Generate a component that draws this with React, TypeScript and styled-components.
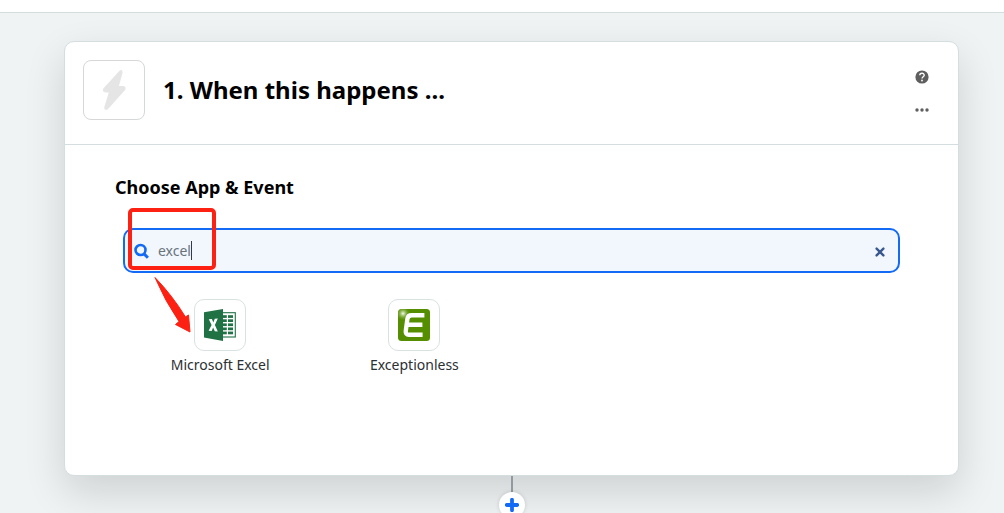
import React, { useState } from "react";
import styled, { createGlobalStyle } from "styled-components";

const GlobalStyle = createGlobalStyle`
  *, *::before, *::after { box-sizing: border-box; }
  body {
    margin: 0;
    overflow: hidden;
    background: #eff3f4;
    color: #000;
    font-family: "Noto Sans", "Open Sans", sans-serif;
  }
`;

const Page = styled.div`
  display: flex;
  flex-direction: column;
  height: 100vh;
  overflow: hidden;
`;

const TopBar = styled.header`
  flex: none;
  height: 13px;
  background: #fff;
  border-bottom: 1px solid #d4dcde;
`;

const Canvas = styled.main`
  flex: none;
  display: flex;
  flex-direction: column;
  align-items: center;
  padding: 28px 45px 0 64px;
`;

const Card = styled.section`
  width: 100%;
  background: #fff;
  border: 1px solid #d4dddf;
  border-radius: 10px;
  box-shadow: 0 16px 40px rgba(0, 0, 0, 0.14);
`;

const CardHeader = styled.div`
  display: flex;
  align-items: center;
  gap: 18px;
  padding: 18px;
  padding-bottom: 24px;
  border-bottom: 1px solid #d4dddf;
`;

const StepIcon = styled.div`
  display: flex;
  align-items: center;
  justify-content: center;
  width: 62px;
  height: 60px;
  border: 1px solid #d5d7d8;
  border-radius: 8px;
`;

const Title = styled.h1`
  flex: 1;
  margin: 0;
  font-size: 24px;
  font-weight: 700;
  line-height: 32px;
`;

const HeaderActions = styled.div`
  display: flex;
  flex-direction: column;
  gap: 18px;
  padding: 6px 11px 0 0;
`;

const IconButton = styled.button`
  display: flex;
  align-items: center;
  justify-content: center;
  width: 15px;
  height: 15px;
  padding: 0;
  border: 0;
  background: none;
  cursor: pointer;
`;

const CardBody = styled.div`
  min-height: 330px;
  padding: 30px 58px 0;
`;

const SectionTitle = styled.h2`
  margin: 0 -8px 28px;
  font-size: 18px;
  font-weight: 700;
  line-height: 25px;
`;

const SearchArea = styled.div`
  position: relative;
`;

const SearchField = styled.label`
  display: flex;
  align-items: center;
  gap: 9px;
  height: 45px;
  padding: 0 11px 0 9px;
  background: #f2f7fe;
  border: 2px solid #136bf5;
  border-radius: 10px;
`;

const QueryWrap = styled.span`
  flex: 1;
  display: flex;
  align-items: center;
`;

const Query = styled.input`
  field-sizing: content;
  min-width: 0;
  padding: 0;
  border: 0;
  outline: 0;
  background: none;
  color: #69737c;
  font: 400 14px/20px "Noto Sans", "Open Sans", sans-serif;
`;

const Caret = styled.span`
  width: 1px;
  height: 19px;
  background: #333b44;
`;

const Highlight = styled.div`
  position: absolute;
  top: -20px;
  left: 5px;
  width: 88px;
  height: 62px;
  border: 4px solid #fc2112;
  border-radius: 5px;
`;

const Arrow = styled.svg`
  position: absolute;
  top: 48px;
  left: 30px;
`;

const Results = styled.ul`
  display: grid;
  grid-template-columns: repeat(4, 1fr);
  margin: 0;
  padding: 26px 0 0;
  list-style: none;
`;

const Result = styled.button`
  display: flex;
  flex-direction: column;
  align-items: center;
  gap: 4px;
  width: 100%;
  padding: 0;
  border: 0;
  background: none;
  color: #2b3033;
  font: 400 14px/20px "Noto Sans", "Open Sans", sans-serif;
  cursor: pointer;
`;

const AppTile = styled.span`
  display: flex;
  align-items: center;
  justify-content: center;
  width: 52px;
  height: 52px;
  border: 1px solid #d9e1e2;
  border-radius: 10px;
`;

const Connector = styled.div`
  width: 2px;
  height: 16px;
  background: #92999f;
`;

const AddButton = styled.button`
  display: flex;
  align-items: center;
  justify-content: center;
  width: 26px;
  height: 26px;
  padding: 0;
  border: 0;
  border-radius: 50%;
  background: #fff;
  box-shadow: 0 0 4px rgba(0, 0, 0, 0.14);
  cursor: pointer;
`;

const Bolt = () => (
  <svg width="26" height="42" viewBox="0 0 26 42" aria-hidden="true">
    <path
      d="M18.5 2.6 3 19.6 Q1.6 22.6 4.6 22.8 L8.6 22.9 3.8 38.4 Q4 41.2 6.4 39.8 L23.6 20.6 Q25 18 22 17.6 L17.2 17.4 21 3.6 Q21.2 .4 18.5 2.6Z"
      fill="#e5e5e5"
      stroke="#e5e5e5"
      strokeWidth="1.2"
      strokeLinejoin="round"
    />
  </svg>
);

const HelpIcon = () => (
  <svg width="14" height="14" viewBox="0 0 14 14" aria-hidden="true">
    <circle cx="7" cy="7" r="6.6" fill="#5f5f5f" />
    <path d="M4.8 5.3C4.8 2.6 9.2 2.6 9.2 5.2 9.2 6.7 7 6.8 7 8.5" fill="none" stroke="#fff" strokeWidth="1.4" />
    <circle cx="7" cy="10.5" r=".9" fill="#fff" />
  </svg>
);

const MoreIcon = () => (
  <svg width="14" height="4" viewBox="0 0 14 4" aria-hidden="true" fill="#5f5f5f">
    <circle cx="2" cy="2" r="1.7" />
    <circle cx="7" cy="2" r="1.7" />
    <circle cx="12" cy="2" r="1.7" />
  </svg>
);

const SearchIcon = () => (
  <svg width="15" height="16" viewBox="0 0 15 16" aria-hidden="true" fill="none" stroke="#136bf5">
    <circle cx="6.5" cy="7" r="5" strokeWidth="2.6" />
    <path d="M9.8 10.6 13.9 14.7" strokeWidth="3" />
  </svg>
);

const ClearIcon = () => (
  <svg width="10" height="12" viewBox="0 0 10 12" aria-hidden="true">
    <path d="M1.6 3.6 8.4 10.4 M8.4 3.6 1.6 10.4" stroke="#38588f" strokeWidth="2.4" strokeLinecap="round" />
  </svg>
);

const PlusIcon = () => (
  <svg width="14" height="14" viewBox="0 0 14 14" aria-hidden="true">
    <path d="M7 1.8V12.2 M1.8 7H12.2" stroke="#136bf5" strokeWidth="3.8" strokeLinecap="round" />
  </svg>
);

const ExcelLogo = () => (
  <svg width="32" height="32" viewBox="0 0 32 32" aria-hidden="true">
    <rect x="17" y="3.7" width="14.3" height="24.3" fill="#fff" stroke="#207245" strokeWidth="1.1" />
    <g fill="#207245">
      {[6.2, 10.3, 14.4, 18.5, 22.6].map((y) => (
        <React.Fragment key={y}>
          <rect x="18.6" y={y} width="4.2" height="2.7" />
          <rect x="24" y={y} width="5" height="2.7" />
        </React.Fragment>
      ))}
      <path d="M0 3.2 19 0V32L0 28.6Z" />
    </g>
    <path
      d="M4.8 10.2 7.9 10 9.3 13.4 10.8 9.8 13.8 9.6 10.9 16 13.8 22.4 10.8 22.2 9.1 18.5 7.7 22 4.6 21.8 7.6 16Z"
      fill="#fff"
    />
  </svg>
);

const ExceptionlessLogo = () => (
  <svg width="32" height="32" viewBox="0 0 32 32" aria-hidden="true">
    <defs>
      <radialGradient id="glow">
        <stop offset="0" stopColor="#fff" stopOpacity=".95" />
        <stop offset=".3" stopColor="#dcebc4" stopOpacity=".6" />
        <stop offset="1" stopColor="#558e00" stopOpacity="0" />
      </radialGradient>
      <clipPath id="tile">
        <rect width="32" height="32" rx="3.5" />
      </clipPath>
    </defs>
    <g clipPath="url(#tile)">
      <rect width="32" height="32" fill="#558e00" />
      <circle cx="5" cy="4.5" r="7.5" fill="url(#glow)" />
    </g>
    <path
      d="M26.4 6.2H13.6Q10 6.2 9.4 9.8L7.8 21.7Q7.3 25.8 10.9 25.8H24.6 M9 15.8H24.4"
      fill="none"
      stroke="#fff"
      strokeWidth="4.4"
    />
  </svg>
);

const apps = [
  { name: "Microsoft Excel", Logo: ExcelLogo },
  { name: "Exceptionless", Logo: ExceptionlessLogo },
];

export default function App() {
  const [query, setQuery] = useState("excel");

  return (
    <Page>
      <GlobalStyle />
      <TopBar />
      <Canvas>
        <Card>
          <CardHeader>
            <StepIcon>
              <Bolt />
            </StepIcon>
            <Title>1. When this happens ...</Title>
            <HeaderActions>
              <IconButton type="button" aria-label="Help">
                <HelpIcon />
              </IconButton>
              <IconButton type="button" aria-label="More options">
                <MoreIcon />
              </IconButton>
            </HeaderActions>
          </CardHeader>
          <CardBody>
            <SectionTitle>Choose App &amp; Event</SectionTitle>
            <SearchArea>
              <SearchField>
                <SearchIcon />
                <QueryWrap>
                  <Query
                    type="text"
                    aria-label="Search apps"
                    value={query}
                    onChange={(e) => setQuery(e.target.value)}
                  />
                  <Caret />
                </QueryWrap>
                <IconButton type="button" aria-label="Clear search" onClick={() => setQuery("")}>
                  <ClearIcon />
                </IconButton>
              </SearchField>
              <Highlight />
              <Arrow width="40" height="58" viewBox="0 0 40 58" aria-hidden="true">
                <path
                  d="M2 1.5Q19 19 32.5 41L35.5 39 37 56 22.5 48.5 26 45.5Q12 25 2 1.5Z"
                  fill="#fc2112"
                  stroke="#fc2112"
                  strokeLinejoin="round"
                />
              </Arrow>
            </SearchArea>
            <Results>
              {apps.map(({ name, Logo }) => (
                <li key={name}>
                  <Result type="button">
                    <AppTile>
                      <Logo />
                    </AppTile>
                    {name}
                  </Result>
                </li>
              ))}
            </Results>
          </CardBody>
        </Card>
        <Connector />
        <AddButton type="button" aria-label="Add step">
          <PlusIcon />
        </AddButton>
      </Canvas>
    </Page>
  );
}
